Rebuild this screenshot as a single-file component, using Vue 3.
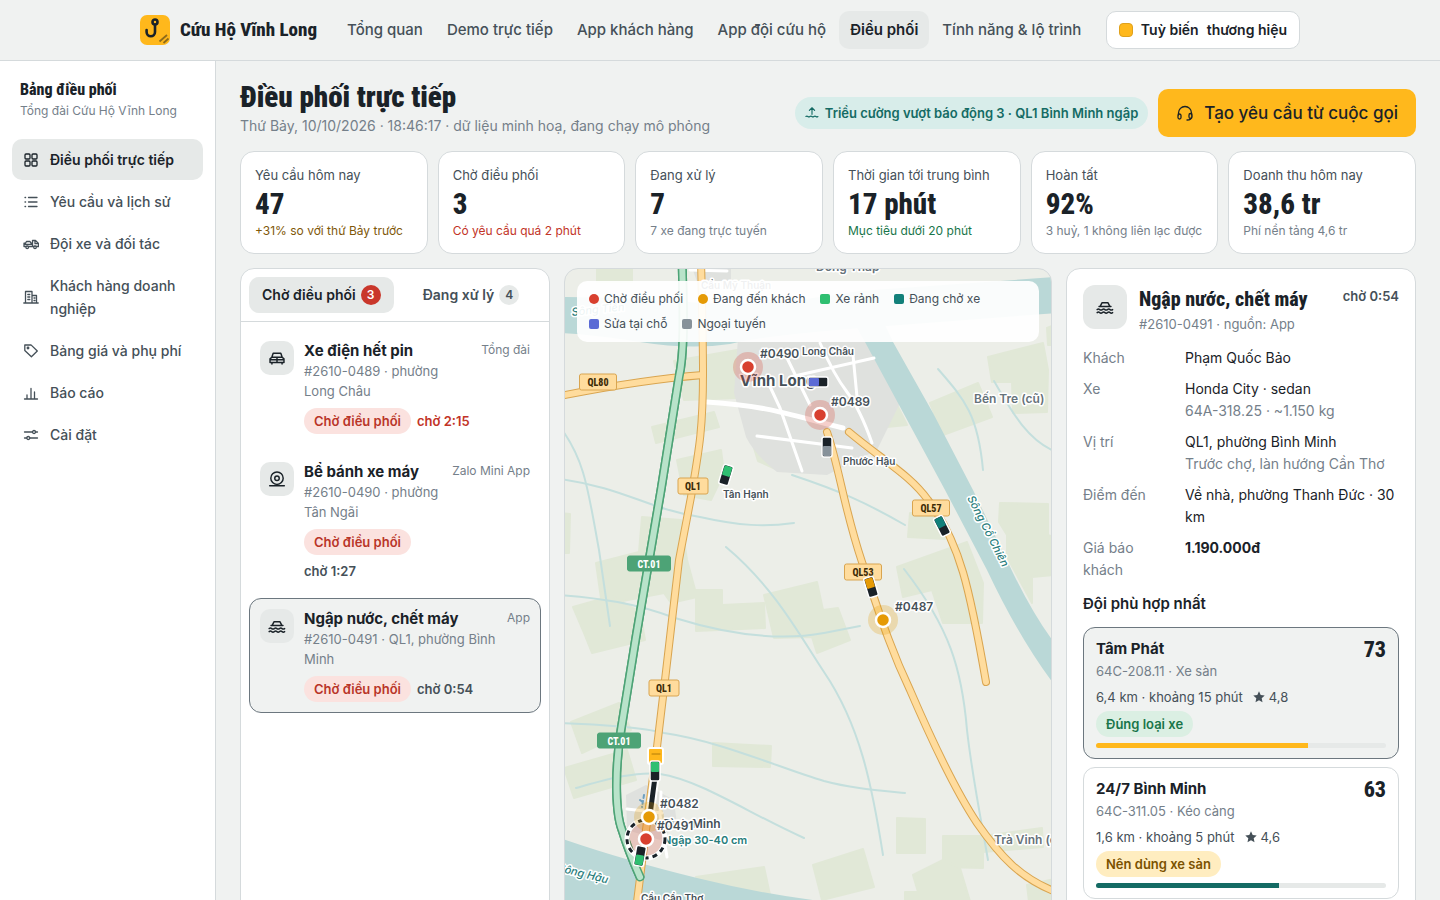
<script setup>
import { ref } from 'vue'

const topNav = ['Tổng quan', 'Demo trực tiếp', 'App khách hàng', 'App đội cứu hộ', 'Điều phối', 'Tính năng & lộ trình']

const icons = {
  grid: '<rect x="2" y="2" width="5" height="5" rx="1"/><rect x="9" y="2" width="5" height="5" rx="1"/><rect x="2" y="9" width="5" height="5" rx="1"/><rect x="9" y="9" width="5" height="5" rx="1"/>',
  list: '<path d="M5.500 3.500h8.500M5.500 8h8.500M5.500 12.500h8.500M2 3.500h.6M2 8h.6M2 12.500h.6"/>',
  truck: '<path d="M1 10.500V7.200h1.500l1-1.700h3.500l1 1.700h1.500V4.500h3l3 3v3zM12 4.800v2.900h2.800M1 8.400h8.500M9.500 7v3.500"/><circle cx="4.200" cy="11.300" r="1.300" fill="#fff"/><circle cx="12" cy="11.300" r="1.300" fill="#fff"/>',
  building: '<path d="M2.500 14V2.500h6.500V14M9 6.500h4.500V14M.8 14h14.400M4.800 5.500h2M4.800 8h2M4.800 10.500h2M11 9h1M11 11.500h1"/>',
  tag: '<path d="M1.800 2v5.500l6.600 6.300 5.900-5.800L8 1.900z"/><circle cx="5" cy="5" r=".8"/>',
  chart: '<path d="M1.500 14h13M4 14v-4M8 14V3.500M11.500 14V7"/>',
  sliders: '<path d="M1.500 5h8M12.700 5h1.800M1.500 11h2.200M7 11h7.500"/><circle cx="11" cy="5" r="1.500"/><circle cx="5.300" cy="11" r="1.500"/>',
  car: '<path d="M1.800 12V8.800L3.400 7.300l1.200-3.600h6.800l1.200 3.600 1.600 1.500V12zM3.400 7.300h9.200M1.800 9.600h12.400M8 7.300V12M3.500 12v1.400M12.500 12v1.400"/>',
  wheel: '<circle cx="8" cy="7.300" r="5.500"/><circle cx="8" cy="7.300" r="2"/><path d="M1.500 14h13"/>',
  flood: '<path d="M3.700 7.500l1.600-3.200h5.400l1.600 3.200M2.700 7.500h10.600M1 10.300q1.200-.9 2.300 0t2.300 0 2.300 0 2.300 0 2.300 0 2.300 0M1 13q1.200-.9 2.300 0t2.300 0 2.300 0 2.300 0 2.300 0 2.300 0"/>'
}

const sideNav = [
  { icon: 'grid', label: 'Điều phối trực tiếp' },
  { icon: 'list', label: 'Yêu cầu và lịch sử' },
  { icon: 'truck', label: 'Đội xe và đối tác' },
  { icon: 'building', label: 'Khách hàng doanh nghiệp' },
  { icon: 'tag', label: 'Bảng giá và phụ phí' },
  { icon: 'chart', label: 'Báo cáo' },
  { icon: 'sliders', label: 'Cài đặt' }
]

const stats = [
  { label: 'Yêu cầu hôm nay', value: '47', note: '+31% so với thứ Bảy trước', tone: 'amber' },
  { label: 'Chờ điều phối', value: '3', note: 'Có yêu cầu quá 2 phút', tone: 'red' },
  { label: 'Đang xử lý', value: '7', note: '7 xe đang trực tuyến', tone: '' },
  { label: 'Thời gian tới trung bình', value: '17 phút', note: 'Mục tiêu dưới 20 phút', tone: 'good' },
  { label: 'Hoàn tất', value: '92%', note: '3 huỷ, 1 không liên lạc được', tone: '' },
  { label: 'Doanh thu hôm nay', value: '38,6 tr', note: 'Phí nền tảng 4,6 tr', tone: '' }
]

const selected = ref('0491')
const jobs = [
  { id: '0489', icon: 'car', title: 'Xe điện hết pin', text: '#2610-0489 · phường Long Châu', channel: 'Tổng đài', wait: '2:15', late: true },
  { id: '0490', icon: 'wheel', title: 'Bể bánh xe máy', text: '#2610-0490 · phường Tân Ngãi', channel: 'Zalo Mini App', wait: '1:27', late: false },
  { id: '0491', icon: 'flood', title: 'Ngập nước, chết máy', text: '#2610-0491 · QL1, phường Bình Minh', channel: 'App', wait: '0:54', late: false }
]

const legend = [
  { label: 'Chờ điều phối', tone: 'l-red', round: true },
  { label: 'Đang đến khách', tone: 'l-amber', round: true },
  { label: 'Xe rảnh', tone: 'l-green' },
  { label: 'Đang chở xe', tone: 'l-teal' },
  { label: 'Sửa tại chỗ', tone: 'l-blue' },
  { label: 'Ngoại tuyến', tone: 'l-gray' }
]

const details = [
  { k: 'Khách', v: 'Phạm Quốc Bảo' },
  { k: 'Xe', v: 'Honda City · sedan', sub: '64A-318.25 · ~1.150 kg' },
  { k: 'Vị trí', v: 'QL1, phường Bình Minh', sub: 'Trước chợ, làn hướng Cần Thơ' },
  { k: 'Điểm đến', v: 'Về nhà, phường Thanh Đức · 30 km' },
  { k: 'Giá báo khách', v: '1.190.000đ', strong: true }
]

const teams = [
  { name: 'Tâm Phát', score: 73, plate: '64C-208.11 · Xe sàn', eta: '6,4 km · khoảng 15 phút', rate: '4,8', tag: 'Đúng loại xe', tone: 'ok', active: true },
  { name: '24/7 Bình Minh', score: 63, plate: '64C-311.05 · Kéo càng', eta: '1,6 km · khoảng 5 phút', rate: '4,6', tag: 'Nên dùng xe sàn', tone: 'warn', active: false }
]

const fields = [
  'M597 262H632V282H597z', 'M674 361L737 350V398L684 400z', 'M652 427L714 412 719 427 656 443z',
  'M677 460L721 450 724 473 711 500 684 495z', 'M754 448L778 470 758 461z',
  'M988 357L1043 343 1048 370 1047 412 1013 413 1012 382 992 382z', 'M930 403L978 383 992 417 943 435z',
  'M897 405L907 425 887 427z', 'M642 517L681 520 687 560 697 597 671 603 664 593 602 605 596 563 639 552z',
  'M573 607L612 596 640 612 645 640 592 653 584 633z', 'M696 590H722V605L764 603 765 628 696 631z',
  'M764 595L817 582 823 610 838 608 850 640 817 653 812 637 774 638z', 'M560 513L570 514 569 553H560z',
  'M571 722L619 703 631 730 582 753z', 'M564 768L627 750 636 780 574 798z', 'M713 743L771 746 770 767 713 766z',
  'M696 877L764 867 770 895 720 900z', 'M813 865L863 849 874 887 822 900z',
  'M1000 503L1048 504V535L1054 537V575L1032 577V603L1007 557V535L999 522z', 'M910 513H940L945 539 908 537z',
  'M897 567L967 542 983 583 982 623H943L932 590 903 597z', 'M897 818L925 819V853H897z',
  'M943 836H983L1042 828 1043 847 983 852V868L943 867z', 'M913 875L943 860 960 868 972 908H905V892H918z',
  'M1027 885L1054 879V910H1030z', 'M1047 328L1054 325V345H1048z'
]

const canals = [
  'M560 427C585 460 588 490 599 550L610 626', 'M560 479C625 488 645 508 700 517 740 526 765 527 794 523',
  'M560 595C600 598 635 603 675 618 720 632 775 642 824 633L860 626', 'M726 547C775 588 800 636 824 672 860 725 872 785 883 855',
  'M560 723C600 724 645 728 664 733 720 741 780 768 824 781 850 788 875 790 905 793',
  'M576 788C605 780 635 771 660 774 700 780 750 814 804 838', 'M904 569C950 628 962 670 967 730 972 775 982 825 988 860',
  'M792 475C840 491 865 502 905 525', 'M938 369C965 400 978 415 983 470', 'M994 381C1010 408 1025 438 1054 451'
]

const ql1 = 'M701 260C702 300 703 340 703 373 703 430 699 450 691 497L679 560 665 680 657 747 646 830 636 910'
const goldRoads = [
  'M560 396Q640 380 703 375', ql1,
  'M827 432C840 470 843 505 862 562 880 615 890 648 910 690 935 748 955 790 977 823 1000 856 1020 878 1056 892',
  'M849 432C885 462 910 475 928 500 960 542 970 590 986 682'
]
const green = 'M682 260C684 320 684 355 679 377L661 490 636 637 621 730C614 775 616 815 622 830Q628 850 640 877'

const streets = [
  'M820 343Q834 375 847 392T872 443', 'M853 355L857 397', 'M790 377L874 358', 'M766 378L780 408 802 471',
  'M757 436L852 448', 'M787 358L810 405', 'M627 809L662 813', 'M661 792L660 815 667 857', 'M690 270L727 271'
]

const shields = [
  { x: 598, y: 382, w: 37, t: 'QL80' }, { x: 693, y: 486, w: 30, t: 'QL1' }, { x: 664, y: 688, w: 30, t: 'QL1' },
  { x: 931, y: 508, w: 37, t: 'QL57' }, { x: 863, y: 572, w: 37, t: 'QL53' },
  { x: 649, y: 564, w: 43, t: 'CT.01', green: true }, { x: 619, y: 741, w: 43, t: 'CT.01', green: true }
]

const trucks = [
  { x: 726, y: 475, r: 17, c: '#2fbf71' }, { x: 818, y: 382, r: -90, c: '#5b6bd5' }, { x: 827, y: 447, r: 180, c: '#87929a' },
  { x: 942, y: 526, r: -27, c: '#12807a' }, { x: 871, y: 587, r: -17, c: '#e59a05' },
  { x: 655, y: 771, r: 0, c: '#2fbf71' }, { x: 640, y: 856, r: 190, c: '#2fbf71' }
]

const pins = [
  { x: 748, y: 367, c: '#d8402f', t: '#0490', lx: 760, ly: 358 }, { x: 820, y: 415, c: '#d8402f', t: '#0489', lx: 831, ly: 406 },
  { x: 883, y: 620, c: '#e59a05', t: '#0487', lx: 895, ly: 611 }, { x: 649, y: 817, c: '#e59a05', t: '#0482', lx: 660, ly: 808 },
  { x: 646, y: 839, c: '#d8402f', t: '#0491', lx: 657, ly: 830 }
]
</script>

<template>
  <div class="app">
    <header class="topbar">
      <div class="topbar-in">
        <a class="brand" href="#">
          <svg width="30" height="30" viewBox="0 0 30 30" aria-hidden="true">
            <rect width="30" height="30" rx="7" fill="#ffb81c" />
            <g fill="none" stroke="#1a2228" stroke-width="2.600" stroke-linecap="round" stroke-linejoin="round">
              <circle cx="15" cy="7" r="2.500" />
              <path d="M15 10v7a4.200 4.200 0 0 1-8.400 0v-2" />
            </g>
            <path d="M19.500 26.500l7.500-6.500M23.500 28l5-4.500" stroke="#8d6a1a" stroke-width="1.800" />
          </svg>
          <span>Cứu Hộ Vĩnh Long</span>
        </a>
        <nav class="topnav">
          <a v-for="n in topNav" :key="n" href="#" :class="{ on: n === 'Điều phối' }">{{ n }}</a>
        </nav>
        <button class="brand-btn" type="button"><i></i><span>Tuỳ biến</span><span>thương hiệu</span></button>
      </div>
    </header>

    <div class="body">
      <aside class="side">
        <div class="side-head">
          <h2>Bảng điều phối</h2>
          <p>Tổng đài Cứu Hộ Vĩnh Long</p>
        </div>
        <nav class="side-nav">
          <a v-for="(n, i) in sideNav" :key="n.label" href="#" :class="{ on: i === 0 }">
            <svg class="ico" width="16" height="16" viewBox="0 0 16 16" v-html="icons[n.icon]"></svg>
            <span>{{ n.label }}</span>
          </a>
        </nav>
      </aside>

      <main class="main">
        <div class="page-head">
          <div class="page-title">
            <h1>Điều phối trực tiếp</h1>
            <p>Thứ Bảy, 10/10/2026 · 18:46:17 · dữ liệu minh hoạ, đang chạy mô phỏng</p>
          </div>
          <div class="alert">
            <svg class="ico" width="14" height="14" viewBox="0 0 16 16"><path d="M8 9.500V2M5 5l3-3 3 3M1 12q1.200-1 2.300 0t2.300 0 2.300 0 2.300 0 2.300 0 2.300 0" /></svg>
            <span>Triều cường vượt báo động 3 · QL1 Bình Minh ngập</span>
          </div>
          <button class="cta" type="button">
            <svg class="ico" width="18" height="18" viewBox="0 0 18 18"><path d="M2.500 11V9a6.500 6.500 0 0 1 13 0v2M15.500 13q0 3-4.500 3" /><rect x="2" y="10" width="3" height="5" rx="1.500" /><rect x="13" y="9.500" width="3" height="5" rx="1.500" /></svg>
            <span>Tạo yêu cầu từ cuộc gọi</span>
          </button>
        </div>

        <section class="stats">
          <article v-for="s in stats" :key="s.label" class="stat">
            <span class="stat-label">{{ s.label }}</span>
            <strong>{{ s.value }}</strong>
            <span class="stat-note" :class="s.tone">{{ s.note }}</span>
          </article>
        </section>

        <section class="board">
          <div class="panel">
            <div class="tabs">
              <button type="button" class="tab on">Chờ điều phối <b>3</b></button>
              <button type="button" class="tab">Đang xử lý <b>4</b></button>
            </div>
            <div class="jobs">
              <button v-for="j in jobs" :key="j.id" type="button" class="job" :class="{ on: selected === j.id }" @click="selected = j.id">
                <span class="job-icon"><svg class="ico" width="18" height="18" viewBox="0 0 16 16" v-html="icons[j.icon]"></svg></span>
                <span class="job-body">
                  <span class="job-title">{{ j.title }}</span>
                  <span class="job-text">{{ j.text }}</span>
                  <span class="job-tags"><span class="pill bad">Chờ điều phối</span><span class="wait" :class="{ late: j.late }">chờ {{ j.wait }}</span></span>
                </span>
                <span class="job-channel">{{ j.channel }}</span>
              </button>
            </div>
          </div>

          <div class="panel map">
            <svg class="map-svg" viewBox="565 269 486 640">
              <path v-for="f in fields" :key="f" :d="f" class="field" />
              <path d="M739 325L734 393 746 437Q755 455 777 472L827 475 877 450 903 397 885 325z" fill="#dfe1de" />
              <path d="M626 795L646 785 674 800 677 825 660 840 627 830z" fill="#dfe1de" />
              <path d="M690 262H731V282L700 290z" fill="#dfe1de" />
              <path v-for="c in canals" :key="c" :d="c" class="canal" />
              <g class="river">
                <path d="M560 297Q640 298 700 303T860 291L1056 277V313L860 328Q760 336 730 344 690 350 640 342T560 333z" />
                <path d="M850 315L865 342 945 490 987 570Q1020 640 1056 687V645Q1035 618 1013 573L973 490 933 413 893 342 878 310z" />
                <path d="M560 838Q620 859 697 878T840 903V915H560z" />
              </g>
              <path v-for="s in streets" :key="s" :d="s" class="street" />
              <path d="M707 402C770 406 790 415 843 428" class="street wide" />
              <path v-for="r in goldRoads" :key="r" :d="r" class="gold-edge" />
              <path :d="green" class="green-edge" />
              <path v-for="r in goldRoads" :key="'i' + r" :d="r" class="gold" />
              <path :d="green" class="green-edge" />
              <path :d="green" class="green" />
              <g v-for="(s, i) in shields" :key="i" class="shield" :class="{ ct: s.green }">
                <rect :x="s.x - s.w / 2" :y="s.y - 8" :width="s.w" :height="s.green ? 15 : 16" rx="2" />
                <text :x="s.x" :y="s.y + 4">{{ s.t }}</text>
              </g>

              <g class="river-name">
                <text transform="translate(572 316) rotate(-6)">Sông Tiền</text>
                <text transform="translate(967 498) rotate(63)">Sông Cổ Chiên</text>
                <text transform="translate(557 871) rotate(14)">Sông Hậu</text>
              </g>
              <g class="place">
                <text x="816" y="271">Đồng Tháp</text>
                <text x="974" y="403">Bến Tre (cũ)</text>
                <text x="994" y="844">Trà Vinh (cũ)</text>
                <text x="663" y="828" class="dark">Bình Minh</text>
                <text x="740" y="386" class="city">Vĩnh Long</text>
              </g>
              <g class="ward">
                <text x="701" y="289">Cầu Mỹ Thuận</text>
                <text x="802" y="355">Long Châu</text>
                <text x="843" y="465">Phước Hậu</text>
                <text x="723" y="498">Tân Hạnh</text>
                <text x="641" y="902">Cầu Cần Thơ</text>
                <text x="663" y="844" class="flood">Ngập 30-40 cm</text>
              </g>

              <path d="M644 795l-2 12M650 790l-2 15M640 800l4 3" stroke="#6d9fc0" stroke-width="2" stroke-dasharray="3 3" />
              <path d="M655 777L650 815" stroke="#fff" stroke-width="9" />
              <path d="M655 777L650 815" stroke="#1a2228" stroke-width="5" />
              <circle cx="646" cy="839" r="19" fill="#d8402f" fill-opacity=".22" stroke="#fff" stroke-width="5" />
              <circle cx="646" cy="839" r="19" fill="none" stroke="#1a2228" stroke-width="3" stroke-dasharray="5 4" />
              <g transform="translate(655 756)"><rect x="-7" y="-8" width="15" height="16" rx="2" fill="#ffb81c" stroke="#fff" stroke-width="2" /><path d="M-3 -2h8" stroke="#b27c08" /></g>
              <circle v-for="p in pins.slice(0, 4)" :key="'h' + p.t" :cx="p.x" :cy="p.y" r="15" :fill="p.c" fill-opacity=".25" />
              <g v-for="(t, i) in trucks" :key="i" :transform="`translate(${t.x} ${t.y}) rotate(${t.r})`">
                <rect x="-5" y="-10" width="10" height="20" rx="2" fill="#1a2228" stroke="#fff" stroke-width="1.500" />
                <rect x="-4" y="-9" width="8" height="10" rx="1" :fill="t.c" />
              </g>
              <g v-for="p in pins" :key="p.t">
                <circle :cx="p.x" :cy="p.y" r="7" :fill="p.c" stroke="#fff" stroke-width="2.500" />
                <text class="pin-label" :x="p.lx" :y="p.ly">{{ p.t }}</text>
              </g>
            </svg>
            <ul class="legend">
              <li v-for="l in legend" :key="l.label"><i :class="[l.tone, { round: l.round }]"></i>{{ l.label }}</li>
            </ul>
          </div>

          <div class="panel detail">
            <div class="detail-head">
              <span class="detail-icon"><svg class="ico" width="18" height="18" viewBox="0 0 16 16" v-html="icons.flood"></svg></span>
              <div class="detail-title">
                <h2>Ngập nước, chết máy</h2>
                <p>#2610-0491 · nguồn: App</p>
              </div>
              <span class="wait">chờ 0:54</span>
            </div>
            <dl>
              <template v-for="d in details" :key="d.k">
                <dt>{{ d.k }}</dt>
                <dd :class="{ strong: d.strong }">{{ d.v }}<small v-if="d.sub">{{ d.sub }}</small></dd>
              </template>
            </dl>
            <h3>Đội phù hợp nhất</h3>
            <div class="teams">
              <button v-for="t in teams" :key="t.name" type="button" class="team" :class="{ on: t.active }">
                <span class="team-top"><span class="team-name">{{ t.name }}</span><span class="score">{{ t.score }}</span></span>
                <span class="plate">{{ t.plate }}</span>
                <span class="meta"><span>{{ t.eta }}</span><svg width="12" height="12" viewBox="0 0 12 12"><path d="M6 .3l1.700 3.700 4 .5-3 2.700.8 4L6 9.200l-3.500 2 .8-4-3-2.700 4-.5z" fill="#455058" /></svg><span>{{ t.rate }}</span></span>
                <span class="pill" :class="t.tone">{{ t.tag }}</span>
                <span class="bar"><span :class="{ gold: t.active }" :style="{ width: t.score + '%' }"></span></span>
              </button>
            </div>
          </div>
        </section>
      </main>
    </div>
  </div>
</template>

<style>
body { background: #f0f2f1; }
</style>

<style scoped>
* { box-sizing: border-box; margin: 0; padding: 0; }
.app { --ink: #1a2228; --mid: #455058; --soft: #75808a; --line: #d5dadc; --tint: #e6e9e8; --cond: "Liberation Sans Narrow", "Roboto Condensed", Roboto, sans-serif; height: 100vh; display: flex; flex-direction: column; overflow: hidden; background: #f0f2f1; color: var(--ink); font: 14px/22px Inter, "Open Sans", sans-serif; }
a { color: inherit; text-decoration: none; }
button { font: inherit; color: inherit; border: 0; background: none; text-align: left; cursor: pointer; }
.app :deep(.ico) { flex: none; fill: none; stroke: currentColor; stroke-width: 1.300; stroke-linecap: round; stroke-linejoin: round; }

.topbar { flex: none; border-bottom: 1px solid var(--line); }
.topbar-in { max-width: 1160px; height: 60px; margin: 0 auto; display: flex; align-items: center; }
.brand { display: flex; align-items: center; gap: 10px; margin-right: 19px; font: 800 19px/30px var(--cond); white-space: nowrap; }
.topnav { display: flex; gap: 2px; white-space: nowrap; font-size: 15px; font-weight: 500; color: var(--mid); }
.topnav a { padding: 8px 11px; border-radius: 10px; }
.topnav .on { background: var(--tint); color: var(--ink); font-weight: 600; }
.brand-btn { margin-left: auto; display: flex; align-items: center; gap: 8px; height: 38px; padding: 0 12px; border: 1px solid var(--line); border-radius: 10px; background: #fff; font-weight: 600; white-space: nowrap; }
.brand-btn i { width: 14px; height: 14px; border-radius: 4px; background: #ffb81c; border: 1px solid #dfa11d; }

.body { flex: 1; min-height: 0; display: flex; }
.side { flex: none; width: 216px; padding: 18px 12px; background: #fff; border-right: 1px solid var(--line); }
.side-head { padding: 0 8px; margin-bottom: 18px; }
.side-head h2 { font: 800 16px/22px var(--cond); }
.side-head p { font-size: 12px; line-height: 20px; color: var(--soft); white-space: nowrap; }
.side-nav { display: flex; flex-direction: column; gap: 1px; font-weight: 500; color: var(--mid); line-height: 23px; }
.side-nav a { display: flex; align-items: center; gap: 11px; padding: 9px 11px; border-radius: 10px; }
.side-nav .on { background: var(--tint); color: var(--ink); font-weight: 600; }

.main { flex: 1; min-width: 0; padding: 19px 24px 24px; overflow: hidden; }
.page-head { display: flex; align-items: center; gap: 10px; margin-bottom: 14px; }
.page-title { flex: 1; min-width: 0; }
h1 { font: 900 29px/35px var(--cond); }
.page-title p { color: var(--soft); line-height: 22px; white-space: nowrap; }
.alert { display: flex; align-items: center; gap: 6px; height: 32px; margin-top: 9px; padding: 0 10px; border-radius: 16px; background: #d8edea; color: #146b64; font-size: 13px; font-weight: 600; white-space: nowrap; }
.cta { display: flex; align-items: center; gap: 10px; height: 48px; margin-top: 9px; padding: 0 18px; border-radius: 10px; background: #ffb81c; font-size: 17px; font-weight: 500; white-space: nowrap; }

.stats { display: grid; grid-template-columns: repeat(6, 1fr); gap: 10px; margin-bottom: 14px; }
.stat { display: flex; flex-direction: column; height: 103px; padding: 12px 14px; border: 1px solid var(--line); border-radius: 14px; background: #fff; white-space: nowrap; }
.stat-label { font-size: 13px; line-height: 22px; color: var(--mid); }
.stat strong { font: 800 29px/36px var(--cond); }
.stat-note { font-size: 12px; line-height: 18px; color: var(--soft); }
.amber { color: #80580a; }
.red { color: #c23427; }
.good { color: #19754a; }

.board { display: grid; grid-template-columns: 310px 1fr 350px; gap: 14px; }
.panel { min-width: 0; border: 1px solid var(--line); border-radius: 14px; background: #fff; }
.tabs { display: flex; gap: 16px; padding: 8px; border-bottom: 1px solid var(--line); }
.tab { display: flex; align-items: center; gap: 5px; height: 36px; padding: 0 13px; border-radius: 10px; font-weight: 600; color: var(--mid); white-space: nowrap; }
.tab.on { background: var(--tint); color: var(--ink); }
.tab b { width: 20px; height: 20px; border-radius: 10px; background: var(--tint); font-size: 12px; line-height: 20px; font-weight: 600; text-align: center; }
.tab.on b { background: #c9372b; color: #fff; }
.jobs { display: flex; flex-direction: column; gap: 6px; padding: 8px; }
.job { display: flex; align-items: flex-start; gap: 10px; padding: 10px; border: 1px solid transparent; border-radius: 12px; }
.job.on { border-color: #6c777f; background: #f0f2f1; }
.job-icon { flex: none; display: grid; place-items: center; width: 34px; height: 34px; border-radius: 10px; background: var(--tint); }
.job-body { flex: 1; min-width: 0; display: flex; flex-direction: column; line-height: 20px; }
.job-title { font-size: 15px; font-weight: 700; white-space: nowrap; }
.job-text { font-size: 13px; color: var(--soft); }
.job-tags { display: flex; flex-wrap: wrap; align-items: center; gap: 6px; margin-top: 7px; }
.job-channel { flex: none; font-size: 12px; line-height: 18px; color: var(--soft); }
.pill { height: 26px; padding: 0 10px; border-radius: 13px; font-size: 13px; line-height: 26px; font-weight: 600; white-space: nowrap; }
.bad { background: #fbe2df; color: #b93528; }
.ok { background: #dbefe3; color: #19754a; }
.warn { background: #ffedc0; color: #7b5200; }
.wait { font-size: 13px; font-weight: 600; color: var(--mid); white-space: nowrap; }
.late { color: #c23427; }

.map { position: relative; overflow: hidden; background: #eceee8; }
.map-svg { display: block; width: 100%; height: auto; }
.map-svg path { stroke-linejoin: round; stroke-linecap: round; }
.field { fill: #e1e8d7; stroke: #e1e8d7; stroke-width: 2; }
.canal { fill: none; stroke: #c4dfdd; stroke-width: 2; }
.river { fill: #bad8d7; }
.street { fill: none; stroke: #fff; stroke-width: 3; }
.street.wide { stroke-width: 5; }
.gold-edge { fill: none; stroke: #d9a550; stroke-width: 8; }
.gold { fill: none; stroke: #ffdc9d; stroke-width: 6; }
.green-edge { fill: none; stroke: #4da376; stroke-width: 9; }
.green { fill: none; stroke: #b9e3ca; stroke-width: 6; }
.shield rect { fill: #ffdc9d; stroke: #d9a550; }
.shield text { fill: #3d2c08; font: 800 10px var(--cond); text-anchor: middle; }
.shield.ct rect { fill: #4da376; stroke: #4da376; }
.shield.ct text { fill: #fff; }
.river-name, .place, .ward, .pin-label { paint-order: stroke; stroke: #fff; stroke-width: 3px; stroke-linejoin: round; }
.river-name { font-size: 11px; font-style: italic; font-weight: 500; fill: #287d7c; }
.place { font-size: 12px; font-weight: 600; fill: #66727a; }
.place .dark { fill: #455058; }
.place .city { fill: #455058; font-size: 15px; font-weight: 700; }
.ward { font-size: 10px; font-weight: 600; fill: #455058; }
.ward .flood { font-size: 11px; fill: #287d7c; }
.pin-label { font-size: 12px; font-weight: 600; fill: #455058; }
.legend { position: absolute; top: 12px; left: 12px; right: 12px; display: flex; flex-wrap: wrap; gap: 3px 15px; padding: 7px 12px; border-radius: 10px; background: rgba(255, 255, 255, .92); list-style: none; font-size: 12px; color: var(--mid); }
.legend li { display: flex; align-items: center; gap: 5px; white-space: nowrap; }
.legend i { width: 10px; height: 10px; border-radius: 2px; }
.legend .round { border-radius: 5px; }
.l-red { background: #d8402f; }
.l-amber { background: #e59a05; }
.l-green { background: #2fbf71; }
.l-teal { background: #12807a; }
.l-blue { background: #5b6bd5; }
.l-gray { background: #87929a; }

.detail { padding: 16px; }
.detail-head { display: flex; align-items: flex-start; gap: 12px; }
.detail-icon { flex: none; display: grid; place-items: center; width: 44px; height: 44px; border-radius: 12px; background: var(--tint); }
.detail-title { flex: 1; min-width: 0; white-space: nowrap; }
.detail-title h2 { font: 800 20px/28px var(--cond); }
.detail-title p { font-size: 13px; line-height: 22px; color: var(--soft); }
dl { display: grid; grid-template-columns: 90px 1fr; gap: 9px 12px; margin: 12px 0 11px; }
dt, dl small { color: var(--soft); }
dl small { display: block; font-size: 14px; white-space: nowrap; }
.strong { font-weight: 700; }
h3 { font-size: 15px; line-height: 24px; font-weight: 600; }
.teams { display: flex; flex-direction: column; gap: 8px; margin-top: 11px; }
.team { display: flex; flex-direction: column; align-items: flex-start; padding: 10px 12px; border: 1px solid var(--line); border-radius: 12px; }
.team.on { border-color: #6c777f; background: #f0f2f1; }
.team-top { display: flex; justify-content: space-between; width: 100%; }
.team-name { font-size: 15px; font-weight: 700; }
.score { font: 800 22px/24px var(--cond); height: 22px; }
.plate { font-size: 13px; color: var(--soft); }
.meta { display: flex; align-items: center; gap: 4px; margin: 4px 0 3px; font-size: 13px; color: var(--mid); }
.meta svg { margin-left: 6px; }
.bar { width: 100%; height: 5px; margin-top: 6px; border-radius: 3px; background: var(--tint); overflow: hidden; }
.bar span { display: block; height: 100%; background: #146b64; }
.bar .gold { background: #ffb81c; }
</style>
